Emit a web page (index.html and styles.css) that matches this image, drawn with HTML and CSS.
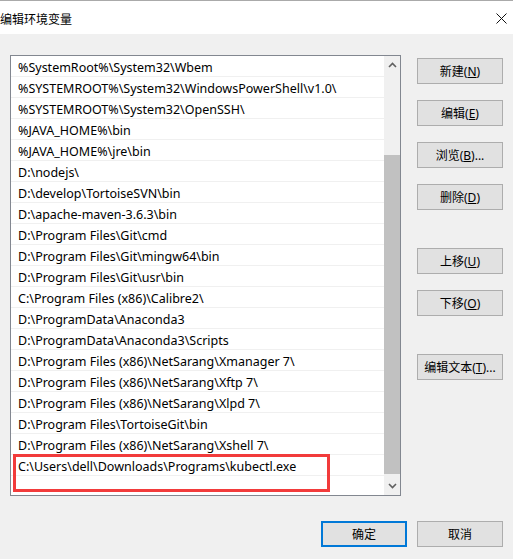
FILE: index.html
```html
<!DOCTYPE html>
<html>
  <head>
    <meta charset="utf-8">
    <title>编辑环境变量</title>
    <link rel="stylesheet" href="styles.css">
  </head>
  <body>
    <div class="titlebar">
      <span class="title">编辑环境变量</span>
      <svg class="close" width="11" height="11" viewBox="0 0 11 11">
        <path d="M0.5 0.5 L10.5 10.5 M10.5 0.5 L0.5 10.5" stroke="#111" stroke-width="1" fill="none"/>
      </svg>
    </div>

    <div class="content">
      <div class="listbox">
        <div class="rows">
          <div class="row">%SystemRoot%\System32\Wbem</div>
          <div class="row">%SYSTEMROOT%\System32\WindowsPowerShell\v1.0\</div>
          <div class="row">%SYSTEMROOT%\System32\OpenSSH\</div>
          <div class="row">%JAVA_HOME%\bin</div>
          <div class="row">%JAVA_HOME%\jre\bin</div>
          <div class="row">D:\nodejs\</div>
          <div class="row">D:\develop\TortoiseSVN\bin</div>
          <div class="row">D:\apache-maven-3.6.3\bin</div>
          <div class="row">D:\Program Files\Git\cmd</div>
          <div class="row">D:\Program Files\Git\mingw64\bin</div>
          <div class="row">D:\Program Files\Git\usr\bin</div>
          <div class="row">C:\Program Files (x86)\Calibre2\</div>
          <div class="row">D:\ProgramData\Anaconda3</div>
          <div class="row">D:\ProgramData\Anaconda3\Scripts</div>
          <div class="row">D:\Program Files (x86)\NetSarang\Xmanager 7\</div>
          <div class="row">D:\Program Files (x86)\NetSarang\Xftp 7\</div>
          <div class="row">D:\Program Files (x86)\NetSarang\Xlpd 7\</div>
          <div class="row">D:\Program Files\TortoiseGit\bin</div>
          <div class="row">D:\Program Files (x86)\NetSarang\Xshell 7\</div>
          <div class="row">C:\Users\dell\Downloads\Programs\kubectl.exe</div>
          <div class="row empty"></div>
          <div class="highlight"></div>
        </div>
        <div class="scrollbar">
          <svg class="arrow" width="9" height="6" viewBox="0 0 9 6">
            <path d="M1 5 L4.5 1.5 L8 5" stroke="#606060" stroke-width="1.6" fill="none"/>
          </svg>
          <div class="track">
            <div class="thumb"></div>
          </div>
          <svg class="arrow" width="9" height="6" viewBox="0 0 9 6">
            <path d="M1 1 L4.5 4.5 L8 1" stroke="#606060" stroke-width="1.6" fill="none"/>
          </svg>
        </div>
      </div>

      <div class="actions">
        <div class="group">
          <button class="btn">新建(<u>N</u>)</button>
          <button class="btn">编辑(<u>E</u>)</button>
          <button class="btn">浏览(<u>B</u>)...</button>
          <button class="btn">删除(<u>D</u>)</button>
        </div>
        <div class="group">
          <button class="btn">上移(<u>U</u>)</button>
          <button class="btn">下移(<u>O</u>)</button>
        </div>
        <div class="group">
          <button class="btn">编辑文本(<u>T</u>)...</button>
        </div>
      </div>
    </div>

    <div class="footer">
      <button class="btn default">确定</button>
      <button class="btn">取消</button>
    </div>
  </body>
</html>
```

FILE: styles.css
```css
body {
  margin: 0;
  width: 513px;
  height: 559px;
  background-color: #f0f0f0;
  font-family: "Noto Sans", "Noto Sans CJK SC", sans-serif;
  font-size: 12px;
  color: #000;
  overflow: hidden;
}

.titlebar {
  display: flex;
  justify-content: space-between;
  align-items: center;
  height: 33px;
  background-color: #fff;
  border-top: 1px solid #aaaaaa;
  padding-right: 6px;
}

.title {
  font-family: "Noto Sans CJK SC", sans-serif;
  font-size: 12px;
  margin-top: 1px;
}

.close {
  margin-top: 1px;
}

.content {
  display: flex;
  padding: 21px 10px 0 10px;
}

.listbox {
  position: relative;
  display: flex;
  width: 390px;
  height: 439px;
  border: 1px solid #828790;
  background-color: #fff;
}

.rows {
  position: relative;
  flex: 1;
}

.row {
  height: 18px;
  line-height: 20px;
  padding: 2px 0 0 7px;
  font-size: 12.5px;
  border-bottom: 1px solid #f0f0f0;
  white-space: nowrap;
}

.row.empty {
  border-bottom: none;
}

.highlight {
  position: absolute;
  left: 2px;
  top: 398px;
  width: 311px;
  height: 32px;
  border: 3px solid #f23b3b;
}

.scrollbar {
  display: flex;
  flex-direction: column;
  align-items: center;
  width: 16px;
  background-color: #f0f0f0;
}

.arrow {
  margin: 6px 0;
}

.track {
  flex: 1;
  width: 100%;
  padding-top: 81px;
  padding-bottom: 3px;
  box-sizing: border-box;
  display: flex;
}

.thumb {
  flex: 1;
  background-color: #c1c1c1;
}

.actions {
  display: flex;
  flex-direction: column;
  gap: 38px;
  margin-left: 16px;
  padding-top: 3px;
}

.group {
  display: flex;
  flex-direction: column;
  gap: 16px;
}

.btn {
  width: 86px;
  height: 26px;
  padding: 0;
  background-color: #e1e1e1;
  border: 1px solid #adadad;
  font-family: "Noto Sans", "Noto Sans CJK SC", sans-serif;
  font-size: 12px;
  color: #000;
}

.btn.default {
  border: 2px solid #0078d7;
}

.footer {
  display: flex;
  justify-content: flex-end;
  gap: 10px;
  padding: 25px 10px 0 0;
}
```
